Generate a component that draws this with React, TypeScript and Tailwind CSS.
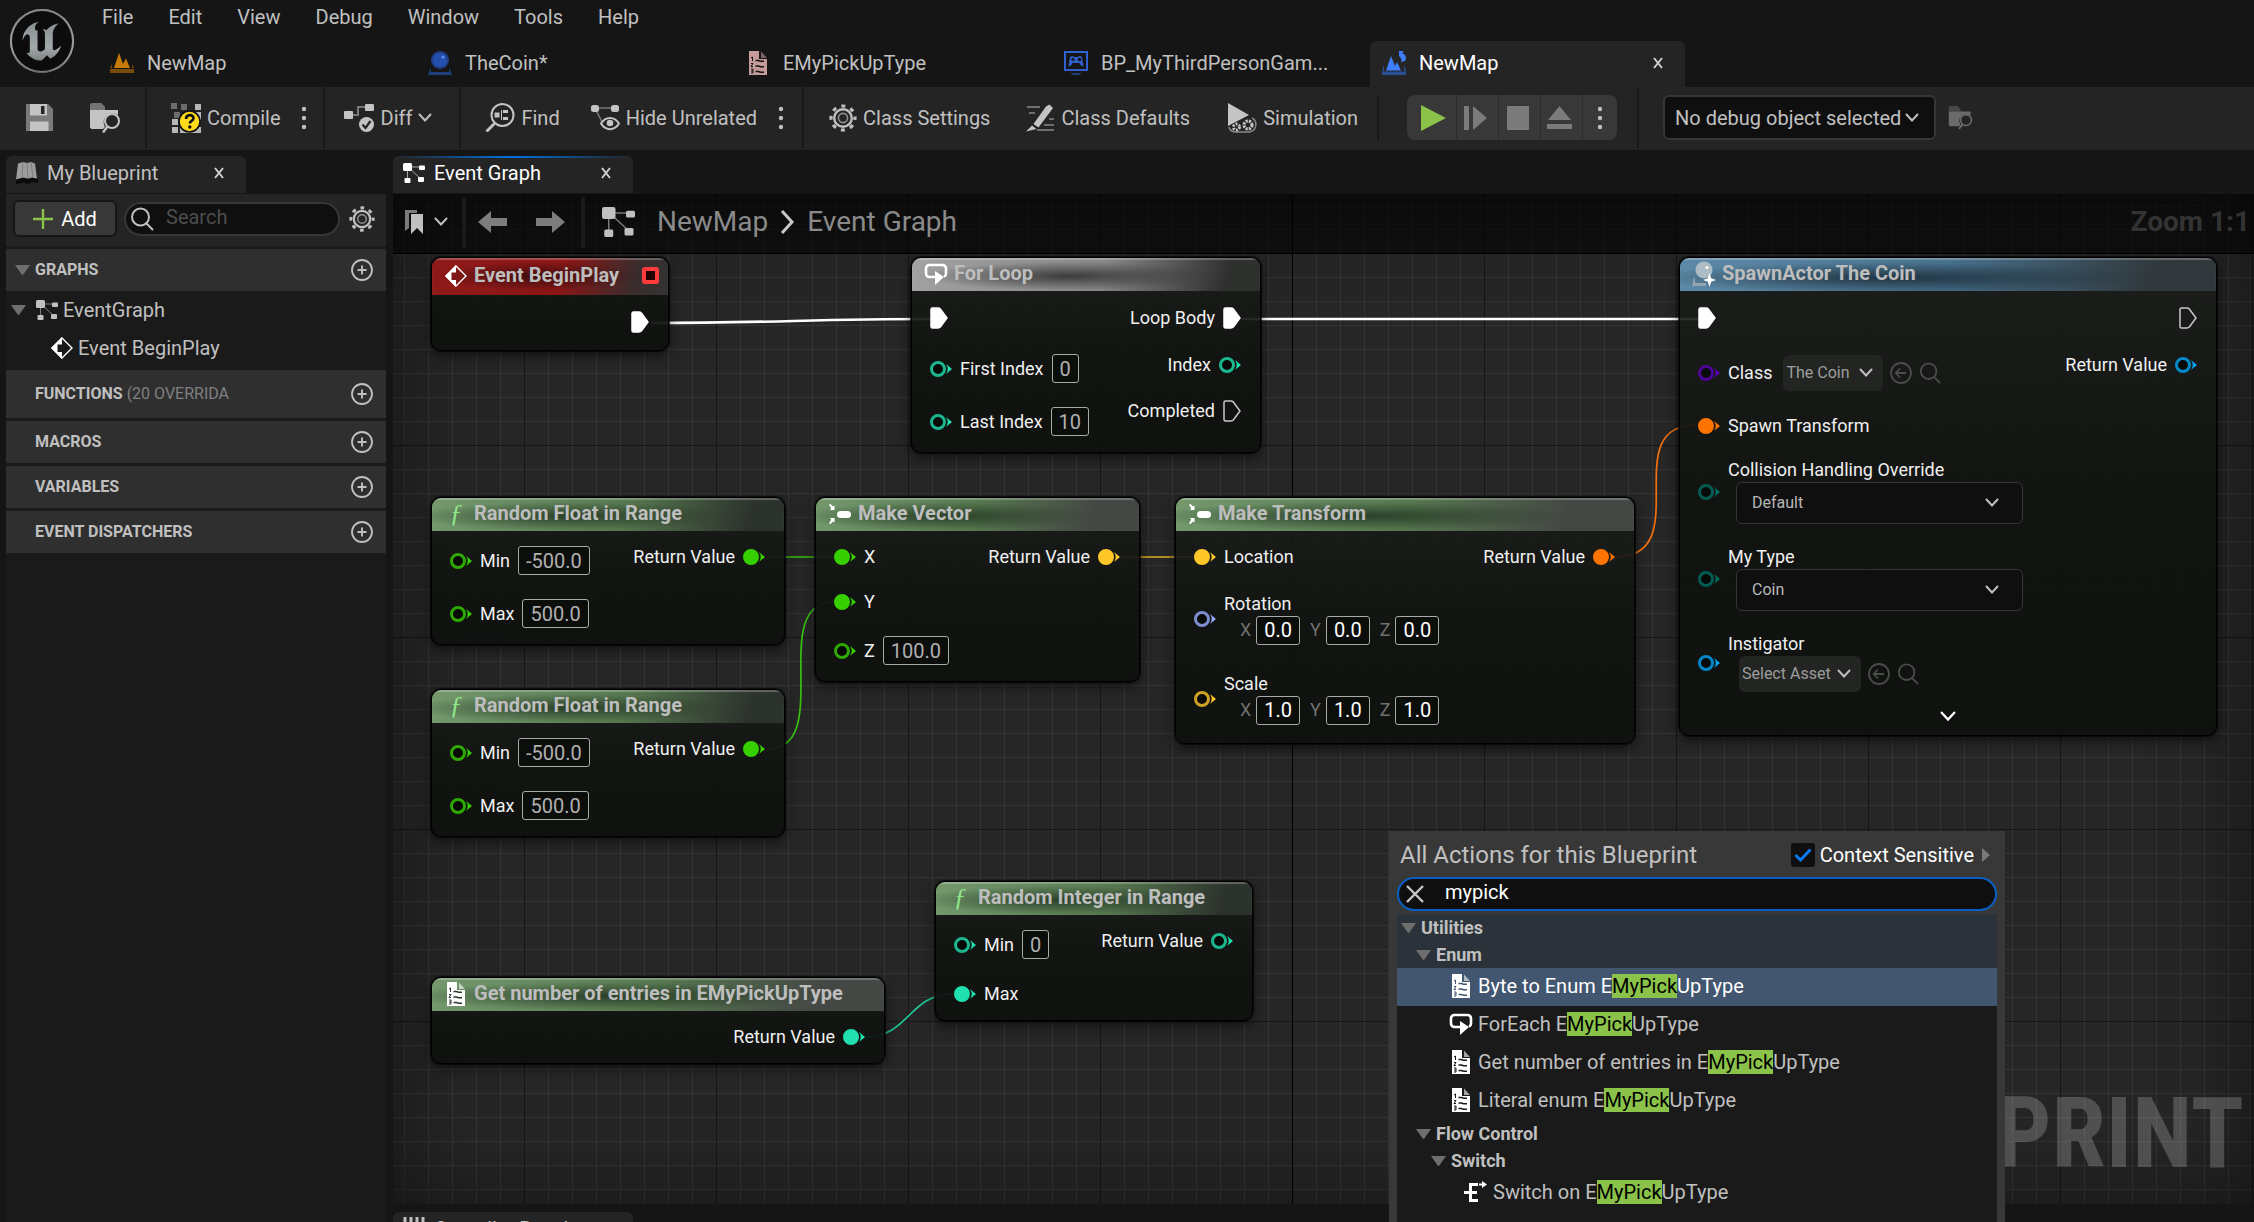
import type { ReactNode } from "react";
import { SiUnrealengine } from "react-icons/si";
import { clsx } from "clsx";

type PinColor = "green" | "teal" | "yellow" | "orange" | "periwinkle" | "purple" | "enum" | "blue";

const PIN_COLORS: Record<PinColor, string> = {
  green: "text-[#36d000]",
  teal: "text-[#1fe0ae]",
  yellow: "text-[#ffc727]",
  orange: "text-[#ff7300]",
  periwinkle: "text-[#99abff]",
  purple: "text-[#5a00b8]",
  enum: "text-[#006f63]",
  blue: "text-[#00a4f4]",
};

/* ---------- icons ---------- */

function Chevron({ className = "w-[14px]" }: { className?: string }) {
  return (
    <svg viewBox="0 0 14 10" className={clsx("shrink-0", className)} fill="none" stroke="currentColor" strokeWidth="2">
      <path d="M1.5 1.5 7 7.5l5.5-6" strokeLinecap="round" />
    </svg>
  );
}

function Dots() {
  return (
    <svg width="6" height="24" viewBox="0 0 6 24" fill="currentColor" className="shrink-0">
      <circle cx="3" cy="3" r="2.2" />
      <circle cx="3" cy="12" r="2.2" />
      <circle cx="3" cy="21" r="2.2" />
    </svg>
  );
}

function TreeArrow() {
  return (
    <svg width="15" height="10" viewBox="0 0 15 10" fill="#6e6e6e" className="shrink-0">
      <path d="M0 0h15L8.500 9.300a1.300 1.300 0 0 1-2 0z" />
    </svg>
  );
}

function GraphIcon({ className = "w-[22px]" }: { className?: string }) {
  return (
    <svg viewBox="0 0 22 20" className={clsx("shrink-0", className)} fill="currentColor">
      <path d="M5 4h13M4.500 4v13M5 4l13 12" stroke="currentColor" strokeWidth="1" opacity=".6" />
      <rect x="0" y="0" width="9" height="8" rx="1.500" />
      <rect x="16" y="2.500" width="6" height="4.500" rx="1" />
      <rect x="1.500" y="15" width="6" height="5" rx="1" />
      <rect x="15" y="14" width="6" height="5" rx="1" />
    </svg>
  );
}

function EventIcon() {
  return (
    <svg width="22" height="22" viewBox="0 0 22 22" className="shrink-0 text-white">
      <path d="M11 1 21 11 11 21 1 11z" fill="none" stroke="currentColor" strokeWidth="1.400" />
      <path d="M11 0 0 11l11 11v-7H6.500V7.500H11z" fill="currentColor" />
    </svg>
  );
}

function LoopIcon() {
  return (
    <svg width="24" height="22" viewBox="0 0 24 22" className="shrink-0 text-white">
      <path d="M11 14H5.500A3.500 3.500 0 0 1 2 10.500v-5A3.500 3.500 0 0 1 5.500 2h13A3.500 3.500 0 0 1 22 5.500v5a3.500 3.500 0 0 1-2 3.200" fill="none" stroke="currentColor" strokeWidth="2.600" />
      <path d="M11 8v14l9-8z" fill="currentColor" />
    </svg>
  );
}

function EnumIcon({ className = "text-white", ink = "#1a1a1a" }: { className?: string; ink?: string }) {
  return (
    <svg width="18" height="24" viewBox="0 0 18 24" className={clsx("shrink-0", className)}>
      <path d="M0 0h10v8h8v16H0z" fill="currentColor" />
      <path d="M12 0.500 18 7h-6z" fill="currentColor" opacity=".6" />
      <path d="M2 7l1.500-1v4M2 12.500h2l-2 3h2M2 18h2v4H2m0-2h2" stroke={ink} strokeWidth="1" fill="none" />
      <path d="M6.500 9.500h3l2 .8h3.500M6.500 15h3l2 .8h3.500M6.500 20.500h3l2 .8h3.500" stroke={ink} strokeWidth="1.500" fill="none" />
    </svg>
  );
}

function MakeIcon() {
  return (
    <svg width="22" height="20" viewBox="0 0 22 20" className="shrink-0 text-white" fill="currentColor">
      <rect x="8" y="7" width="14" height="7" rx="3.500" />
      <path d="M0 .5 1.500 0 4 2.500 5.500 1.500V6H1l1.200-1.500zM0 19.500l1.500.5L4 17.500l1.500 1V14H1l1.200 1.500z" />
    </svg>
  );
}

function SwitchIcon() {
  return (
    <svg width="24" height="22" viewBox="0 0 24 22" className="shrink-0 text-white">
      <path d="M14 3.500H6.500v16H14M0 11.500h13" fill="none" stroke="currentColor" strokeWidth="3" />
      <path d="M15 3.500h3" stroke="currentColor" strokeWidth="2" />
      <path d="M18 0v7l5-3.500z" fill="currentColor" />
    </svg>
  );
}

function SpawnIcon() {
  return (
    <svg width="24" height="26" viewBox="0 0 24 26" className="shrink-0">
      <ellipse cx="12" cy="9" rx="8.500" ry="8.500" fill="#aebcc5" />
      <circle cx="15" cy="6.500" r="1.500" fill="#fff" />
      <path d="M3 17v5h11v3H0l2-8z" fill="#93a6b2" />
      <path d="M17.500 12l1.700 5.300 4.800 1.700-4.800 1.700-1.700 5.300-1.700-5.300L11 19l4.800-1.700z" fill="#fff" />
    </svg>
  );
}

function SearchIcon({ className = "w-6" }: { className?: string }) {
  return (
    <svg viewBox="0 0 24 24" className={clsx("shrink-0", className)} fill="none" stroke="currentColor" strokeWidth="2">
      <circle cx="10.500" cy="10" r="8.500" />
      <path d="m16.500 16.500 6 6" strokeLinecap="round" />
    </svg>
  );
}

function GearIcon({ className = "w-7" }: { className?: string }) {
  return (
    <svg viewBox="0 0 28 28" className={clsx("shrink-0", className)} fill="none" stroke="currentColor">
      <circle cx="14" cy="14" r="8.800" strokeWidth="2.400" />
      <circle cx="14" cy="14" r="4.600" strokeWidth="1.600" opacity=".7" />
      <circle cx="14" cy="14" r="12" strokeWidth="3.200" strokeDasharray="4 5.420" strokeDashoffset="2" />
    </svg>
  );
}

function CirclePlus() {
  return (
    <svg width="22" height="22" viewBox="0 0 22 22" fill="none" stroke="#c0c0c0">
      <circle cx="11" cy="11" r="10" strokeWidth="1.800" />
      <path d="M11 6.500v9M6.500 11h9" strokeWidth="1.900" />
    </svg>
  );
}

function BackCircle() {
  return (
    <svg width="22" height="22" viewBox="0 0 22 22" fill="none" stroke="currentColor" strokeWidth="1.800" className="shrink-0">
      <circle cx="11" cy="11" r="10" />
      <path d="M16 11H6m4-4.500L5.700 11l4.300 4.500" />
    </svg>
  );
}

function BrowseIcon({ className = "w-8" }: { className?: string }) {
  return (
    <svg viewBox="0 0 32 30" className={clsx("shrink-0", className)}>
      <path d="M1 5V1.500L2.500 0h10l3.500 4v3H1z" fill="currentColor" opacity=".5" />
      <path d="M1 7h28v5a9 9 0 0 0-13 12l-2 2H2.500L1 24.500z" fill="currentColor" />
      <circle cx="23" cy="18" r="7" fill="none" stroke="currentColor" strokeWidth="2" />
      <path d="m18.500 23.500-4.500 6" stroke="currentColor" strokeWidth="2.400" />
    </svg>
  );
}

function SaveIcon() {
  return (
    <svg width="27" height="27" viewBox="0 0 27 27" className="shrink-0">
      <path d="M0 0h22l5 5v22H0z" fill="#7a7a7a" />
      <path d="M4 0h17v11.500H4zM4 17.500h18.500V27H4z" fill="#c4c4c4" />
      <path d="M15 2h3.500v8H15z" fill="#242424" />
    </svg>
  );
}

function CompileIcon() {
  return (
    <svg width="30" height="30" viewBox="0 0 30 30" className="shrink-0">
      <path d="M0 0h6v6H0zM10 1h6v6h-6zM3 9h6v6H3z" fill="#6d6d6d" />
      <path d="M24 1h6v6h-6zM1 16h6v6H1zM1 24h6v6H1zM9 24h21v6H9zM25 9h5v8h-5z" fill="#b8b8b8" />
      <circle cx="18.500" cy="18.500" r="10.500" fill="#ffd91a" stroke="#111" strokeWidth="1.600" />
      <path d="M15 16c0-5 7.500-5 7.500-.8 0 2.800-3.700 2.600-3.700 5.300" fill="none" stroke="#111" strokeWidth="2.600" />
      <circle cx="18.800" cy="24" r="1.700" fill="#111" />
    </svg>
  );
}

function DiffIcon() {
  return (
    <svg width="31" height="29" viewBox="0 0 31 29" className="shrink-0" fill="#c4c4c4">
      <path d="M8 12h6V4h8" fill="none" stroke="#777" strokeWidth="2" />
      <rect x="0" y="8" width="9" height="8" rx="1" />
      <rect x="21" y="1" width="9" height="7" rx="1" />
      <circle cx="22.500" cy="21.500" r="7.500" />
      <path d="m18.500 21.500 3 3.500 5-7" fill="none" stroke="#242424" strokeWidth="2.200" />
    </svg>
  );
}

function FindIcon() {
  return (
    <svg width="30" height="29" viewBox="0 0 30 29" className="shrink-0">
      <circle cx="17.500" cy="12" r="11" fill="none" stroke="#c4c4c4" strokeWidth="2" />
      <path d="m9.500 20.500-8 8" stroke="#c4c4c4" strokeWidth="3" />
      <path d="M9.500 9.500h5v5h-5zM18 7h5v3h-5zM18 14h5v3h-5z" fill="#c4c4c4" />
      <path d="M16.500 7v10" stroke="#c4c4c4" />
    </svg>
  );
}

function HideIcon() {
  return (
    <svg width="29" height="27" viewBox="0 0 29 27" className="shrink-0">
      <path d="M6 4h17M5 6l6 12" stroke="#777" strokeWidth="1.600" />
      <rect x="0" y="1" width="8" height="7" rx="2.500" fill="#c4c4c4" />
      <rect x="20" y="1" width="8" height="7" rx="2.500" fill="#c4c4c4" />
      <path d="M10 19.500c4.500-7.500 13.500-7.500 18 0-4.500 7.500-13.500 7.500-18 0z" fill="none" stroke="#c4c4c4" strokeWidth="2" />
      <circle cx="19" cy="19" r="3.300" fill="#c4c4c4" />
    </svg>
  );
}

function DefaultsIcon() {
  return (
    <svg width="29" height="28" viewBox="0 0 29 28" className="shrink-0">
      <path d="M1 3h13M3 9h6M23 15h5M18 21h10M11 26h17" stroke="#6f6f6f" strokeWidth="2" />
      <path d="M20 2.500 23.500.5 27 4 12.500 23.500l-5-3.500zM6 21.500l4.500 3.500L0 27.500z" fill="#c4c4c4" />
    </svg>
  );
}

function SimulationIcon() {
  return (
    <svg width="31" height="30" viewBox="0 0 31 30" className="shrink-0">
      <path d="M2 0 23 12 2 23z" fill="#c4c4c4" />
      <path d="M3 24c1 4 4 5 7 5h13a7.500 7.500 0 0 0 3-14" fill="none" stroke="#8a8a8a" strokeWidth="1.500" />
      <circle cx="10.500" cy="24" r="3" fill="none" stroke="#c4c4c4" strokeWidth="3" strokeDasharray="2 1.200" />
      <circle cx="22" cy="22" r="4" fill="none" stroke="#c4c4c4" strokeWidth="3.200" strokeDasharray="2.200 1" />
    </svg>
  );
}

function LevelIcon() {
  return (
    <svg width="24" height="20" viewBox="0 0 24 20" className="shrink-0">
      <path d="M0 16h24v4H0zM2 11v4H0zM22 11v4h2z" fill="#7a4a08" />
      <path d="M4 15 9 0l4 11 3-5.500L20 15z" fill="#c87a06" />
    </svg>
  );
}

function ActorIcon() {
  return (
    <svg width="24" height="24" viewBox="0 0 24 24" className="shrink-0">
      <path d="M3 16v5h18v-5l3 8H0z" fill="#1f3f7d" />
      <circle cx="12" cy="9" r="9" fill="#1f3f86" />
      <circle cx="12" cy="9" r="7" fill="#2450ad" />
      <circle cx="15" cy="6" r="1.600" fill="#5c8df5" />
    </svg>
  );
}

function GameModeIcon() {
  return (
    <svg width="24" height="24" viewBox="0 0 24 24" className="shrink-0">
      <rect x="1" y="1" width="22" height="18" fill="none" stroke="#2f62d0" strokeWidth="2" />
      <path d="M4.500 15 6 6.500c1-2 3-2 4-.5h4c1-1.500 3-1.500 4 .5l1.500 8.500c-2 1-3-1-4-3h-7c-1 2-2 4-4 3z" fill="#2f62d0" />
      <path d="M7 8.500h4M9 6.500v4" stroke="#151515" strokeWidth="1.200" />
      <circle cx="15.500" cy="8.500" r="1.800" fill="#151515" />
      <path d="M6 22h12l-3 2H9z" fill="#1f3f7d" />
    </svg>
  );
}

function LevelBlueprintIcon() {
  return (
    <svg width="24" height="24" viewBox="0 0 24 24" className="shrink-0">
      <path d="M0 20.500h24V24H0zM2 14v6H0zM22 14v6h2z" fill="#2b4f96" />
      <path d="M4 19.500 9 5l4 10 2-4 4 8.500z" fill="#3f7dff" />
      <path d="M17 0h5l-2 2c4 2 5 5 3 8l-4 1c1-3 0-4-2-6z" fill="#3f7dff" />
    </svg>
  );
}

/* ---------- window chrome ---------- */

const MENUS = ["File", "Edit", "View", "Debug", "Window", "Tools", "Help"];

const TABS = [
  { icon: <LevelIcon />, label: "NewMap" },
  { icon: <ActorIcon />, label: "TheCoin*" },
  { icon: <EnumIcon className="mx-[3px] text-[#c49a9a]" ink="#151515" />, label: "EMyPickUpType" },
  { icon: <GameModeIcon />, label: "BP_MyThirdPersonGam..." },
  { icon: <LevelBlueprintIcon />, label: "NewMap", active: true },
];

function CloseIcon() {
  return (
    <svg width="10" height="12" viewBox="0 0 10 12" stroke="#d0d0d0" strokeWidth="2">
      <path d="m1 1 8 10M9 1 1 11" />
    </svg>
  );
}

function TitleBar() {
  return (
    <header className="flex h-[87px] shrink-0">
      <div className="w-[98px] shrink-0 pt-[9px] pl-[10px]">
        <svg width="0" height="0" className="absolute">
          <linearGradient id="steel" x1="0" y1="0" x2="0" y2="1">
            <stop offset="0" stopColor="#7d8284" />
            <stop offset=".6" stopColor="#a3a8aa" />
            <stop offset="1" stopColor="#5a6062" />
          </linearGradient>
        </svg>
        <div className="size-16 rounded-full bg-[#0c0c0c] ring-2 ring-[#8c8c8c] ring-inset">
          <SiUnrealengine size={64} fill="url(#steel)" />
        </div>
      </div>
      <div className="flex min-w-0 flex-1 flex-col justify-between">
        <nav className="flex h-[34px] items-center gap-[35px] pl-1">
          {MENUS.map((menu) => (
            <button key={menu} type="button">{menu}</button>
          ))}
        </nav>
        <div className="flex gap-[3px]">
          {TABS.map((tab, i) => (
            <div
              key={i}
              className={clsx(
                "flex h-[46px] w-[315px] items-center gap-[13px] rounded-t-md pr-[22px] pb-[2px] pl-3",
                tab.active && "bg-[#242424] text-white"
              )}
            >
              {tab.icon}
              <span className="flex-1 truncate">{tab.label}</span>
              {tab.active && (
                <button type="button" aria-label="Close tab"><CloseIcon /></button>
              )}
            </div>
          ))}
        </div>
      </div>
    </header>
  );
}

function ToolButton({ icon, children }: { icon: ReactNode; children?: ReactNode }) {
  return (
    <button type="button" className="flex items-center gap-[6px] whitespace-nowrap">
      {icon}
      {children}
    </button>
  );
}

function Separator() {
  return <div className="w-[2px] self-stretch bg-[#181818]" />;
}

function Toolbar() {
  return (
    <div className="flex h-[63px] shrink-0 items-center bg-[#242424] pb-[2px]">
      <div className="flex items-center gap-9 pr-6 pl-[26px]">
        <button type="button" aria-label="Save"><SaveIcon /></button>
        <button type="button" aria-label="Browse to asset" className="text-[#c4c4c4]"><BrowseIcon /></button>
      </div>
      <Separator />
      <div className="flex items-center gap-5 pr-4 pl-6">
        <ToolButton icon={<CompileIcon />}>Compile</ToolButton>
        <button type="button" aria-label="Compile options"><Dots /></button>
      </div>
      <Separator />
      <div className="flex pr-[27px] pl-[19px]">
        <ToolButton icon={<DiffIcon />}>Diff <Chevron /></ToolButton>
      </div>
      <Separator />
      <div className="flex items-center gap-[31px] pr-[18px] pl-6">
        <ToolButton icon={<FindIcon />}>Find</ToolButton>
        <div className="flex items-center gap-[21px]">
          <ToolButton icon={<HideIcon />}>Hide Unrelated</ToolButton>
          <button type="button" aria-label="Hide unrelated options"><Dots /></button>
        </div>
      </div>
      <Separator />
      <div className="flex items-center gap-9 pr-[19px] pl-[25px]">
        <ToolButton icon={<GearIcon />}>Class Settings</ToolButton>
        <ToolButton icon={<DefaultsIcon />}>Class Defaults</ToolButton>
        <ToolButton icon={<SimulationIcon />}>Simulation</ToolButton>
      </div>
      <div className="h-[45px] w-[2px] bg-[#181818]" />
      <div className="mr-5 ml-7 flex h-[45px] divide-x divide-[#2c2c2c] overflow-hidden rounded-lg bg-[#383838]">
        <button type="button" aria-label="Play" className="grid w-[50px] place-items-center pl-1">
          <svg width="25" height="26" viewBox="0 0 25 26"><path d="M0 0 25 13 0 26z" fill="#8bc34a" /></svg>
        </button>
        <button type="button" aria-label="Skip frame" className="grid w-[42px] place-items-center pr-1">
          <svg width="24" height="24" viewBox="0 0 24 24" fill="#7b7b7b"><path d="M0 0h5v24H0zM9 0l14 12L9 24z" /></svg>
        </button>
        <button type="button" aria-label="Stop" className="grid w-[42px] place-items-center pr-1">
          <span className="h-6 w-[22px] bg-[#7b7b7b]" />
        </button>
        <button type="button" aria-label="Eject" className="grid w-[42px] place-items-center pr-1">
          <svg width="25" height="23" viewBox="0 0 25 23" fill="#7b7b7b"><path d="M12.500 0 24 14H1zM0 18h25v5H0z" /></svg>
        </button>
        <button type="button" aria-label="Play options" className="grid w-[34px] place-items-center"><Dots /></button>
      </div>
      <Separator />
      <div className="relative ml-6 flex items-center">
        <select
          aria-label="Debug object"
          className="h-[45px] w-[273px] appearance-none rounded-md border-2 border-[#363636] bg-[#0f0f0f] pl-[10px]"
        >
          <option>No debug object selected</option>
        </select>
        <span className="pointer-events-none absolute right-[17px]"><Chevron /></span>
      </div>
      <button type="button" aria-label="Browse to debug object" className="ml-3 text-[#6b6b6b]">
        <BrowseIcon className="w-[25px]" />
      </button>
    </div>
  );
}

function PanelTab({ icon, label, active }: { icon: ReactNode; label: string; active?: boolean }) {
  return (
    <div className={clsx("relative flex h-[37px] w-[240px] items-center gap-2 overflow-hidden rounded-t-md bg-[#242424] pr-[22px] pb-[3px] pl-[9px]", active && "text-white")}>
      {active && <div className="absolute inset-x-0 top-0 h-[2px] bg-linear-to-r from-transparent via-[#0070e0] to-transparent" />}
      <span className="flex w-6 justify-center">{icon}</span>
      <span className="flex-1">{label}</span>
      <button type="button" aria-label={`Close ${label}`}><CloseIcon /></button>
    </div>
  );
}

/* ---------- my blueprint ---------- */

function SectionHeader({ title, note, open, tall }: { title: string; note?: string; open?: boolean; tall?: boolean }) {
  return (
    <div className={clsx("flex items-center bg-[#2f2f2f] pr-[13px] pl-[9px] text-[16px]", tall ? "h-12" : "h-[42px]")}>
      <span className="w-5">{open && <TreeArrow />}</span>
      <h2 className="font-bold">{title}</h2>
      {note && <span className="ml-1 whitespace-nowrap text-[#808080]">{note}</span>}
      <button type="button" aria-label={`Add to ${title}`} className="ml-auto"><CirclePlus /></button>
    </div>
  );
}

function MyBlueprint() {
  return (
    <aside className="mr-[7px] ml-[6px] flex w-[380px] shrink-0 flex-col">
      <PanelTab
        label="My Blueprint"
        icon={
          <svg width="24" height="22" viewBox="0 0 24 22" className="shrink-0">
            <path d="m1 17 7-1 5 1 5-1 5 1v4l-5-1-5 2-5-1-7 1z" fill="#0a0a0a" />
            <path d="M3 1.500 8 0l4 1 4-1 4 1.500 2 15-5-1-4 1-5-1-7 2z" fill="#9c9c9c" />
            <path d="M8 0 7 16M12 1l1 15M16 0l2 15" stroke="#808080" strokeWidth="1" />
          </svg>
        }
      />
      <div className="mt-px flex h-[52px] items-center bg-[#242424] pb-[3px] pl-[7px]">
        <button type="button" className="flex h-[37px] w-[104px] items-center justify-center gap-2 rounded-md border-2 border-[#161616] bg-[#383838] text-white">
          <svg width="20" height="20" viewBox="0 0 20 20" stroke="#8bc34a" strokeWidth="2.400"><path d="M10 0v20M0 10h20" /></svg>
          Add
        </button>
        <label className="ml-[7px] flex h-[34px] w-[216px] items-center gap-3 rounded-full border-2 border-[#363636] bg-[#0f0f0f] pl-1">
          <SearchIcon />
          <input type="search" aria-label="Search" placeholder="Search" className="w-[150px] bg-transparent pb-1 outline-none placeholder:text-[#4d4d4d]" />
        </label>
        <button type="button" aria-label="Panel settings" className="ml-[9px]"><GearIcon className="w-[26px]" /></button>
      </div>
      <div className="flex flex-1 flex-col gap-[3px] bg-[#1a1a1a] pt-[3px]">
        <div>
          <SectionHeader title="GRAPHS" open />
          <div className="flex h-[38px] items-center pl-[5px]">
            <TreeArrow />
            <GraphIcon className="mr-[5px] ml-[10px] w-[22px]" />
            EventGraph
          </div>
          <div className="flex h-[38px] items-center gap-[5px] pl-[45px]">
            <EventIcon />
            Event BeginPlay
          </div>
        </div>
        <SectionHeader title="FUNCTIONS" note="(20 OVERRIDA" tall />
        <SectionHeader title="MACROS" />
        <SectionHeader title="VARIABLES" />
        <SectionHeader title="EVENT DISPATCHERS" />
      </div>
    </aside>
  );
}

/* ---------- graph nodes ---------- */

function ExecPin({ linked }: { linked?: boolean }) {
  return (
    <svg width="18" height="22" viewBox="0 0 18 22" className="shrink-0">
      <path
        d="M1 2.500Q1 1 2.500 1H8q1.500 0 2.500 1.200L17 11l-6.500 8.800Q9.500 21 8 21H2.500Q1 21 1 19.500z"
        fill={linked ? "#fff" : "none"}
        stroke={linked ? "#fff" : "#c8c8c8"}
        strokeWidth="1.500"
      />
    </svg>
  );
}

function DataPin({ color, linked }: { color: PinColor; linked?: boolean }) {
  return (
    <svg width="22" height="16" viewBox="0 0 22 16" className={clsx("shrink-0", PIN_COLORS[color])}>
      <circle cx="8" cy="8" r="6.500" fill={linked ? "currentColor" : "#060806"} stroke="currentColor" strokeWidth="3" opacity={linked ? 1 : 0.8} />
      <path d="M16 3 22 8l-6 5a9 9 0 0 0 0-10z" fill="currentColor" />
    </svg>
  );
}

function ValueBox({ value, label, bright }: { value: string; label: string; bright?: boolean }) {
  return (
    <input
      aria-label={label}
      defaultValue={value}
      className={clsx(
        "field-sizing-content h-[29px] rounded-[3px] border border-[#a9aba9] bg-[#0c0e0c] px-[7px] text-[20px] outline-none",
        bright ? "text-white" : "text-[#b0b0b0]"
      )}
    />
  );
}

function ExecRow({ label, linked, out }: { label?: string; linked?: boolean; out?: boolean }) {
  return (
    <div className={clsx("flex h-12 items-center gap-2", out && "justify-end")}>
      {label}
      <ExecPin linked={linked} />
    </div>
  );
}

function OutRow({ label, color, linked }: { label: string; color: PinColor; linked?: boolean }) {
  return (
    <div className="flex h-[45px] items-center justify-end gap-2">
      {label}
      <DataPin color={color} linked={linked} />
    </div>
  );
}

function InRow({ label, color, linked, value }: { label: string; color: PinColor; linked?: boolean; value?: string }) {
  return (
    <div className={clsx("flex items-center gap-2", value === undefined ? "h-[45px]" : "h-[53px]")}>
      <DataPin color={color} linked={linked} />
      {label}
      {value !== undefined && <ValueBox value={value} label={label} />}
    </div>
  );
}

function VectorRow({ label, color, value }: { label: string; color: PinColor; value: string }) {
  return (
    <div className="flex h-20 items-center gap-2">
      <DataPin color={color} />
      <div className="pb-[2px]">
        <div className="leading-6">{label}</div>
        <div className="flex items-center gap-[10px] pl-4">
          {["X", "Y", "Z"].map((axis) => (
            <label key={axis} className="flex items-center gap-[5px] text-[#6f716f]">
              {axis}
              <ValueBox value={value} label={`${label} ${axis}`} bright />
            </label>
          ))}
        </div>
      </div>
    </div>
  );
}

function EnumRow({ label, options }: { label: string; options: string[] }) {
  return (
    <div className="flex h-[87px] items-center gap-2">
      <DataPin color="enum" />
      <label className="pb-[2px]">
        <span className="block leading-6">{label}</span>
        <span className="relative ml-2 flex items-center">
          <select className="h-[42px] w-[287px] appearance-none rounded-md border border-[#343634] bg-[#0f0f0f] pl-[15px] text-[16px] text-[#b8b8b8]">
            {options.map((option) => (
              <option key={option}>{option}</option>
            ))}
          </select>
          <span className="pointer-events-none absolute right-6 text-[#c0c0c0]"><Chevron /></span>
        </span>
      </label>
    </div>
  );
}

function AssetPicker({ label, value, className }: { label: string; value: string; className: string }) {
  return (
    <div className="flex items-center gap-[7px] text-[#4a4c4a]">
      <div className="relative flex items-center">
        <select
          aria-label={label}
          className={clsx("h-9 appearance-none rounded-md bg-[#232523] pl-[3px] text-[16px] text-[#9d9d9d]", className)}
        >
          <option>{value}</option>
        </select>
        <span className="pointer-events-none absolute right-[10px] text-[#c0c0c0]"><Chevron /></span>
      </div>
      <button type="button" aria-label="Use selected asset"><BackCircle /></button>
      <button type="button" aria-label="Browse to asset"><SearchIcon className="w-[22px]" /></button>
    </div>
  );
}

const HEADER_STYLES = {
  red: "h-[37px] bg-[radial-gradient(ellipse_at_45%_50%,#2a0b0bcc,transparent_55%),linear-gradient(105deg,#8f1a1a_0%,#8a1616_55%,#3a2c2c_85%,#333_100%)]",
  gray: "h-[33px] bg-[radial-gradient(ellipse_at_45%_55%,#303030dd,transparent_55%),linear-gradient(105deg,#a2a2a2_0%,#858585_55%,#2e302e_90%)]",
  green: "h-[33px] bg-[radial-gradient(ellipse_at_40%_55%,#1f2f1fcc,transparent_55%),linear-gradient(105deg,#73996d_0%,#56784f_55%,#2c322c_90%)]",
  pure: "h-[33px] bg-[radial-gradient(ellipse_at_40%_55%,#1f2f1fcc,transparent_55%),linear-gradient(105deg,#73996d_0%,#56784f_50%,#444844_85%)]",
  blue: "h-[33px] bg-[radial-gradient(ellipse_at_40%_60%,#16252fcc,transparent_55%),linear-gradient(105deg,#5d8aa8_0%,#47708c_50%,#30383c_88%)]",
};

interface NodeProps {
  title: string;
  icon: ReactNode;
  header: keyof typeof HEADER_STYLES;
  className: string;
  inputs?: ReactNode;
  outputs?: ReactNode;
  badge?: ReactNode;
  footer?: ReactNode;
}

function GraphNode({ title, icon, header, className, inputs, outputs, badge, footer }: NodeProps) {
  return (
    <section className={clsx("absolute overflow-hidden rounded-[10px] border border-black bg-linear-to-b from-[#1b1d1be6] via-[#101310ee] to-[#0d100dee] pb-1 text-[18px] text-[#f0f0f0] shadow-[0_0_0_1px_rgba(0,0,0,0.6),0_4px_12px_rgba(0,0,0,0.6)]", className)}>
      <div className={clsx("flex items-center gap-[6px] pr-[9px] pb-[3px] pl-3 shadow-[inset_0_2px_1px_rgba(255,255,255,0.25)]", HEADER_STYLES[header])}>
        <span className="flex w-6 shrink-0 justify-center pt-[2px]">{icon}</span>
        <h3 className="flex-1 text-[20px] font-bold whitespace-nowrap text-[#bebebe]">{title}</h3>
        {badge}
      </div>
      <div className="flex justify-between pt-[3px] pr-[19px] pl-[18px]">
        <div>{inputs}</div>
        <div>{outputs}</div>
      </div>
      {footer}
    </section>
  );
}

function FunctionGlyph() {
  return <span className="font-['Liberation_Serif',serif] text-[26px] leading-6 text-[#8fe68a] italic">ƒ</span>;
}

function RandomFloat({ className }: { className: string }) {
  return (
    <GraphNode
      title="Random Float in Range"
      icon={<FunctionGlyph />}
      header="green"
      className={className}
      inputs={
        <>
          <InRow label="Min" color="green" value="-500.0" />
          <InRow label="Max" color="green" value="500.0" />
        </>
      }
      outputs={<OutRow label="Return Value" color="green" linked />}
    />
  );
}

// Wires run underneath the nodes, which are slightly see-through
function Wires() {
  return (
    <svg className="pointer-events-none absolute inset-0 size-full" fill="none">
      <path d="M899.500 0V1010M0 59.500H1861" stroke="#000" />
      <path d="M258 129C380 129 420 125 537 125M849 125H1305" stroke="#fff" strokeWidth="2.600" />
      <path d="M374 363H441M374 555C443 555 373 408 441 408" stroke="#36c010" strokeWidth="1.700" />
      <path d="M727 363H801" stroke="#e0ae25" strokeWidth="1.700" />
      <path d="M1222 363C1305 363 1222 231 1303 231" stroke="#f07010" strokeWidth="1.700" />
      <path d="M472 843C517 843 515 800 560 800" stroke="#1fc79b" strokeWidth="1.700" />
    </svg>
  );
}

function GraphBar() {
  return (
    <div className="relative flex h-[59px] items-center bg-black/60 pb-[3px] pl-3 text-[28px] text-[#8a8a8a]">
      <button type="button" aria-label="Bookmarks" className="flex items-center gap-[10px] text-[#c0c0c0]">
        <svg width="19" height="24" viewBox="0 0 19 24">
          <path d="M0 0h12v3H4v15l-4 3z" fill="#7a7a7a" />
          <path d="M6 4h12v20l-6-6-6 6z" fill="#c0c0c0" />
        </svg>
        <Chevron />
      </button>
      <div className="mr-3 ml-[14px] h-[51px] w-1 bg-[#1a1a1a]" />
      <button type="button" aria-label="Back">
        <svg width="29" height="22" viewBox="0 0 29 22" fill="#7d7d7d"><path d="M0 11 13 0v7h16v8H13v7z" /></svg>
      </button>
      <button type="button" aria-label="Forward" className="ml-[29px]">
        <svg width="29" height="22" viewBox="0 0 29 22" fill="#7d7d7d"><path d="M29 11 16 0v7H0v8h16v7z" /></svg>
      </button>
      <div className="mr-[17px] ml-4 h-[51px] w-1 bg-[#1a1a1a]" />
      <span className="text-[#c0c0c0]"><GraphIcon className="w-[33px]" /></span>
      <a href="#newmap" className="ml-[22px]">NewMap</a>
      <svg width="15" height="24" viewBox="0 0 15 24" className="mx-3 shrink-0" fill="none" stroke="#c8c8c8" strokeWidth="3"><path d="m2 1 10 11L2 23" /></svg>
      <span>Event Graph</span>
      <span className="mr-1 ml-auto font-bold text-[#333]">Zoom 1:1</span>
    </div>
  );
}

function Canvas() {
  return (
    <div className="relative flex-1 overflow-hidden bg-[#262626] bg-[linear-gradient(to_right,#161616_1px,transparent_1px),linear-gradient(to_bottom,#161616_1px,transparent_1px),linear-gradient(to_right,#343434_1px,transparent_1px),linear-gradient(to_bottom,#343434_1px,transparent_1px)] [background-position:131px_0,0_59px,11px_0,0_11px] [background-size:192px_192px,192px_192px,24px_24px,24px_24px]">
      <div className="pointer-events-none absolute inset-0 shadow-[inset_0_0_90px_rgba(0,0,0,0.5)]" />
      <GraphBar />
      <Wires />
      <div className="absolute right-[10px] bottom-[21px] font-['Roboto_Condensed','Liberation_Sans_Narrow',Roboto,sans-serif] text-[98px] leading-none font-bold text-white/20">BLUEPRINT</div>

      <GraphNode
        title="Event BeginPlay"
        icon={<EventIcon />}
        header="red"
        className="top-[63px] left-[38px] w-[238px]"
        badge={<span className="h-[17px] w-[17px] rounded-[3px] border-4 border-[#ff3b3b] bg-[#200]" />}
        outputs={<ExecRow linked out />}
      />
      <GraphNode
        title="For Loop"
        icon={<LoopIcon />}
        header="gray"
        className="top-[63px] left-[518px] w-[350px]"
        inputs={
          <>
            <ExecRow linked />
            <InRow label="First Index" color="teal" value="0" />
            <InRow label="Last Index" color="teal" value="10" />
          </>
        }
        outputs={
          <>
            <ExecRow label="Loop Body" linked out />
            <OutRow label="Index" color="teal" />
            <ExecRow label="Completed" out />
          </>
        }
      />
      <RandomFloat className="top-[303px] left-[38px] w-[354px]" />
      <RandomFloat className="top-[495px] left-[38px] w-[354px]" />
      <GraphNode
        title="Make Vector"
        icon={<MakeIcon />}
        header="pure"
        className="top-[303px] left-[422px] w-[325px]"
        inputs={
          <>
            <InRow label="X" color="green" linked />
            <InRow label="Y" color="green" linked />
            <InRow label="Z" color="green" value="100.0" />
          </>
        }
        outputs={<OutRow label="Return Value" color="yellow" linked />}
      />
      <GraphNode
        title="Make Transform"
        icon={<MakeIcon />}
        header="pure"
        className="top-[303px] left-[782px] w-[460px]"
        inputs={
          <>
            <InRow label="Location" color="yellow" linked />
            <VectorRow label="Rotation" color="periwinkle" value="0.0" />
            <VectorRow label="Scale" color="yellow" value="1.0" />
          </>
        }
        outputs={<OutRow label="Return Value" color="orange" linked />}
      />
      <GraphNode
        title="SpawnActor The Coin"
        icon={<SpawnIcon />}
        header="blue"
        className="top-[63px] left-[1286px] w-[538px]"
        inputs={
          <>
            <ExecRow linked />
            <div className="flex h-[61px] items-center gap-2">
              <DataPin color="purple" />
              <span className="mr-[3px]">Class</span>
              <AssetPicker label="Class" value="The Coin" className="w-[100px]" />
            </div>
            <InRow label="Spawn Transform" color="orange" linked />
            <EnumRow label="Collision Handling Override" options={["Default", "Always Spawn"]} />
            <EnumRow label="My Type" options={["Coin"]} />
            <div className="flex h-[81px] items-center gap-2">
              <DataPin color="blue" />
              <div className="pb-[2px]">
                <div className="leading-6">Instigator</div>
                <div className="pl-[11px]">
                  <AssetPicker label="Instigator" value="Select Asset" className="w-[122px]" />
                </div>
              </div>
            </div>
          </>
        }
        outputs={
          <>
            <ExecRow out />
            <OutRow label="Return Value" color="blue" />
          </>
        }
        footer={
          <button type="button" aria-label="Show advanced pins" className="flex h-7 w-full items-center justify-center text-white">
            <Chevron className="w-4" />
          </button>
        }
      />
      <GraphNode
        title="Random Integer in Range"
        icon={<FunctionGlyph />}
        header="green"
        className="top-[687px] left-[542px] w-[318px]"
        inputs={
          <>
            <InRow label="Min" color="teal" value="0" />
            <InRow label="Max" color="teal" linked />
          </>
        }
        outputs={<OutRow label="Return Value" color="teal" />}
      />
      <GraphNode
        title="Get number of entries in EMyPickUpType"
        icon={<EnumIcon ink="#2a3a2a" />}
        header="pure"
        className="top-[783px] left-[38px] w-[454px]"
        outputs={<OutRow label="Return Value" color="teal" linked />}
      />
    </div>
  );
}

/* ---------- action menu ---------- */

function Marked({ text }: { text: string }) {
  const [before, after] = text.split("MyPick");
  return (
    <span>
      {before}
      <mark className="bg-[#8bc34a] text-black">MyPick</mark>
      {after}
    </span>
  );
}

function ActionItem({ icon, text, selected, deep }: { icon: ReactNode; text: string; selected?: boolean; deep?: boolean }) {
  return (
    <li className={clsx("flex h-[38px] items-center gap-1 pb-[2px]", deep ? "pl-[66px]" : "pl-[51px]", selected && "bg-[#42566f] text-white")}>
      <span className="flex w-[26px] justify-center">{icon}</span>
      <Marked text={text} />
    </li>
  );
}

function ActionGroup({ label, className }: { label: string; className: string }) {
  return (
    <li className={clsx("flex h-[27px] items-center gap-[5px] text-[18px] font-bold", className)}>
      <TreeArrow />
      {label}
    </li>
  );
}

function ActionMenu() {
  return (
    <div className="absolute top-[675px] bottom-0 left-[996px] w-[616px] bg-[#383838] px-2">
      <div className="flex h-[46px] items-center pt-[2px] pr-[7px] pl-[3px]">
        <h2 className="flex-1 text-[24px]">All Actions for this Blueprint</h2>
        <label className="flex items-center gap-[5px] text-white">
          <span className="relative grid place-items-center">
            <input type="checkbox" defaultChecked className="peer size-6 appearance-none rounded-[3px] bg-[#0f0f0f]" />
            <svg width="18" height="14" viewBox="0 0 18 14" className="pointer-events-none absolute hidden peer-checked:block" fill="none" stroke="#0d7bf0" strokeWidth="3">
              <path d="m1.500 7 5 5L16.500 1.500" />
            </svg>
          </span>
          Context Sensitive
        </label>
        <svg width="8" height="14" viewBox="0 0 8 14" className="ml-2" fill="#7a7a7a"><path d="m0 0 8 7-8 7z" /></svg>
      </div>
      <div className="flex h-[34px] items-center gap-[21px] rounded-full border-2 border-[#0a5fc4] bg-[#0f0f0f] pl-[7px]">
        <button type="button" aria-label="Clear search">
          <svg width="18" height="18" viewBox="0 0 18 18" stroke="#c8c8c8" strokeWidth="2.400"><path d="m1 1 16 16M17 1 1 17" /></svg>
        </button>
        <input aria-label="Search actions" defaultValue="mypick" className="flex-1 bg-transparent pb-1 text-white outline-none" />
      </div>
      <ul className="mt-[3px] h-full bg-[#1a1a1a]">
        <ActionGroup label="Utilities" className="bg-[#2b323a] pl-[4px]" />
        <ActionGroup label="Enum" className="bg-[#2b323a] pl-[19px]" />
        <ActionItem icon={<EnumIcon ink="#42566f" />} text="Byte to Enum EMyPickUpType" selected />
        <ActionItem icon={<LoopIcon />} text="ForEach EMyPickUpType" />
        <ActionItem icon={<EnumIcon />} text="Get number of entries in EMyPickUpType" />
        <ActionItem icon={<EnumIcon />} text="Literal enum EMyPickUpType" />
        <ActionGroup label="Flow Control" className="pl-[19px]" />
        <ActionGroup label="Switch" className="pl-[34px]" />
        <ActionItem icon={<SwitchIcon />} text="Switch on EMyPickUpType" deep />
      </ul>
    </div>
  );
}

export default function App() {
  return (
    <div className="flex h-screen flex-col overflow-hidden bg-[#151515] font-[Roboto,sans-serif] text-[20px] leading-6 text-[#c0c0c0]">
      <TitleBar />
      <Toolbar />
      <div className="flex min-h-0 flex-1 pt-[6px]">
        <MyBlueprint />
        <main className="relative flex min-w-0 flex-1 flex-col">
          <PanelTab label="Event Graph" active icon={<GraphIcon />} />
          <div className="mt-px flex min-h-0 flex-1 flex-col">
            <Canvas />
          </div>
          <div className="mt-2 h-[10px] overflow-hidden">
            <PanelTab
              label="Compiler Results"
              icon={
                <svg width="22" height="24" viewBox="0 0 22 24" stroke="#c0c0c0" strokeWidth="3"><path d="M2 0v24M8 0v24M14 0v24M20 0v24" /></svg>
              }
            />
          </div>
          <ActionMenu />
        </main>
      </div>
    </div>
  );
}
